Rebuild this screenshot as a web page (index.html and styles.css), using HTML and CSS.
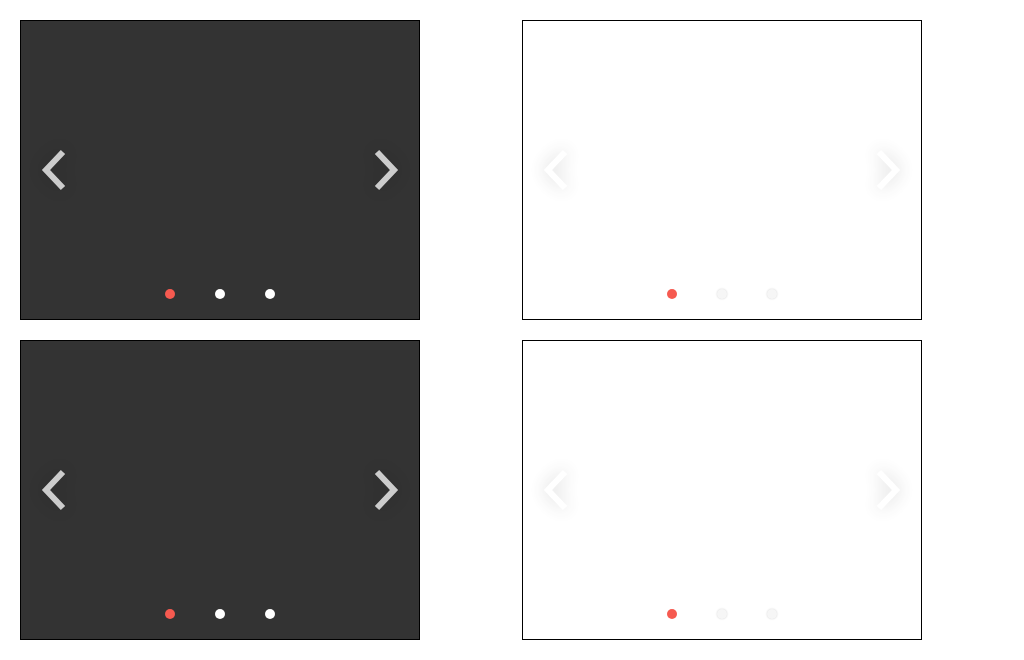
FILE: index.html
```html
<!DOCTYPE html>
<html>
<head>
<meta charset="utf-8">
<link rel="stylesheet" href="styles.css">
</head>
<body>
<div class="grid">
  <div class="carousel dark">
    <button class="arrow prev"><svg width="30" height="44" viewBox="0 0 30 44"><polyline points="25,4 8,22 25,40" /></svg></button>
    <button class="arrow next"><svg width="30" height="44" viewBox="0 0 30 44"><polyline points="5,4 22,22 5,40" /></svg></button>
    <div class="dots"><span class="dot active"></span><span class="dot"></span><span class="dot"></span></div>
  </div>
  <div class="carousel light">
    <button class="arrow prev"><svg width="30" height="44" viewBox="0 0 30 44"><polyline points="25,4 8,22 25,40" /></svg></button>
    <button class="arrow next"><svg width="30" height="44" viewBox="0 0 30 44"><polyline points="5,4 22,22 5,40" /></svg></button>
    <div class="dots"><span class="dot active"></span><span class="dot"></span><span class="dot"></span></div>
  </div>
  <div class="carousel dark">
    <button class="arrow prev"><svg width="30" height="44" viewBox="0 0 30 44"><polyline points="25,4 8,22 25,40" /></svg></button>
    <button class="arrow next"><svg width="30" height="44" viewBox="0 0 30 44"><polyline points="5,4 22,22 5,40" /></svg></button>
    <div class="dots"><span class="dot active"></span><span class="dot"></span><span class="dot"></span></div>
  </div>
  <div class="carousel light">
    <button class="arrow prev"><svg width="30" height="44" viewBox="0 0 30 44"><polyline points="25,4 8,22 25,40" /></svg></button>
    <button class="arrow next"><svg width="30" height="44" viewBox="0 0 30 44"><polyline points="5,4 22,22 5,40" /></svg></button>
    <div class="dots"><span class="dot active"></span><span class="dot"></span><span class="dot"></span></div>
  </div>
</div>
</body>
</html>
```

FILE: styles.css
```css
html, body {
  margin: 0;
  padding: 0;
  background: #fff;
  font-family: "Liberation Sans", Arial, sans-serif;
}
.grid {
  display: grid;
  grid-template-columns: 400px 400px;
  grid-auto-rows: 300px;
  column-gap: 102px;
  row-gap: 20px;
  padding: 20px;
}
.carousel {
  position: relative;
  box-sizing: border-box;
  border: 1px solid #000;
  display: flex;
  align-items: center;
  justify-content: space-between;
  padding: 0 17px;
}
.dark { background: #333; }
.light { background: #fff; }
.arrow {
  border: 0;
  background: none;
  padding: 0;
  margin: 0;
  width: 30px;
  height: 44px;
  display: block;
  opacity: 0.75;
  filter: drop-shadow(0 0 9px rgba(0,0,0,0.25));
}
.arrow svg { display: block; }
.arrow polyline {
  fill: none;
  stroke: #fff;
  stroke-width: 6;
  stroke-linecap: butt;
  stroke-linejoin: miter;
}
.dots {
  position: absolute;
  left: 0;
  right: 0;
  bottom: 20px;
  display: flex;
  justify-content: center;
  gap: 40px;
}
.dot {
  width: 10px;
  height: 10px;
  border-radius: 50%;
  background: #fff;
}
.light .dot {
  background: #f6f6f6;
  box-shadow: 0 0 2px rgba(0,0,0,0.18);
}
.dot.active, .light .dot.active {
  background: #f65a50;
  box-shadow: none;
}
```
